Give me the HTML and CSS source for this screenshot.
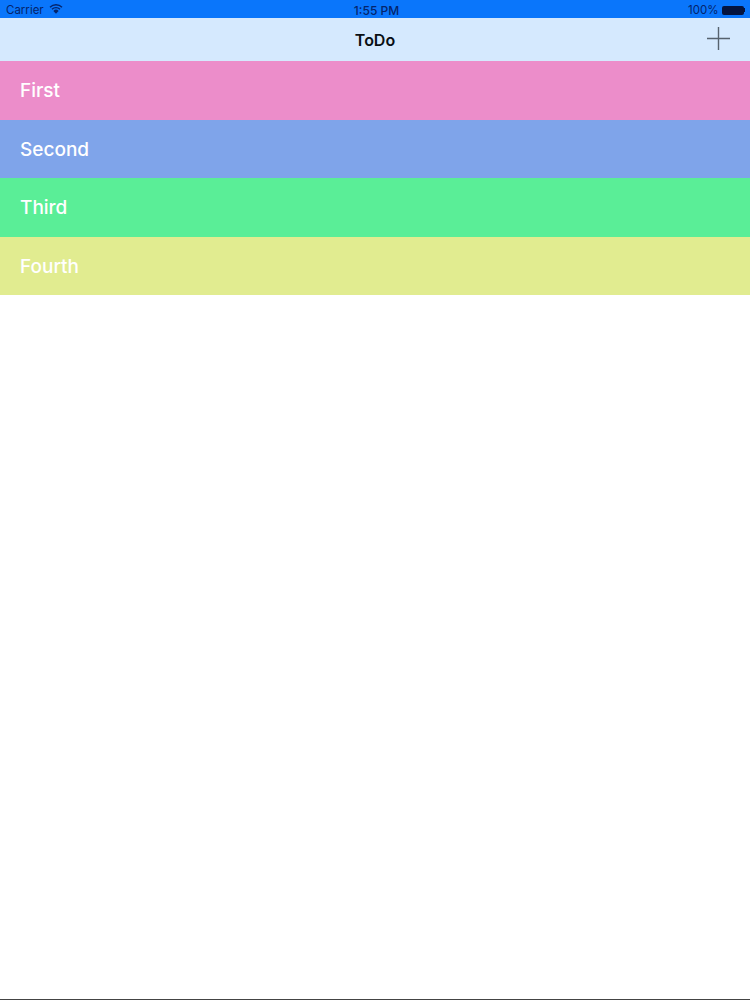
FILE: index.html
```html
<!DOCTYPE html>
<html lang="en">
<head>
<meta charset="utf-8">
<title>ToDo</title>
<link rel="stylesheet" href="styles.css">
</head>
<body>
<div class="app">
  <div class="status">
    <div class="status-left">
      <span>Carrier</span>
      <svg class="wifi" viewBox="0 0 14 10" width="14" height="10"><path d="M7 9.8 L4.4 6.9 A3.6 3.6 0 0 1 9.6 6.9 Z" fill="#04246b"/><path d="M3 5.3 A5.7 5.7 0 0 1 11 5.3" fill="none" stroke="#04246b" stroke-width="1.4"/><path d="M1 3.2 A8.5 8.5 0 0 1 13 3.2" fill="none" stroke="#04246b" stroke-width="1.4"/></svg>
    </div>
    <div class="status-time">1:55 PM</div>
    <div class="status-right">
      <span>100%</span>
      <span class="battery"></span>
      <span class="battery-tip"></span>
    </div>
  </div>
  <div class="nav">
    <div class="nav-title">ToDo</div>
    <svg class="plus" viewBox="0 0 23 23" width="23" height="23"><path d="M11.5 0V23M0 11.5H23" stroke="#56626e" stroke-width="1.4" fill="none"/></svg>
  </div>
  <div class="row pink"><span>First</span></div>
  <div class="row blue"><span>Second</span></div>
  <div class="row green"><span>Third</span></div>
  <div class="row yellow"><span>Fourth</span></div>
  <div class="empty"></div>
  <div class="bottom"></div>
</div>
</body>
</html>
```
FILE: styles.css
```css
* { box-sizing: border-box; }
html, body { margin: 0; padding: 0; background: #fff; }
.app {
  width: 750px;
  height: 1000px;
  display: flex;
  flex-direction: column;
  font-family: Inter, "Liberation Sans", sans-serif;
  overflow: hidden;
}
.status {
  height: 18px;
  background: #0a76fb;
  color: #04246b;
  font-size: 11.5px;
  display: flex;
  align-items: center;
  justify-content: space-between;
  padding: 2px 5px 0 6px;
  position: relative;
  flex: none;
}
.status-left { display: flex; align-items: center; gap: 5px; }
.wifi { display: block; margin-top: -2px; }
.status-time { font-weight: 500; font-size: 12px; position: absolute; left: 0; right: 0; top: 3px; text-align: center; padding-left: 3px; }
.status-right { display: flex; align-items: center; }
.battery { width: 22px; height: 9px; background: #04143f; border-radius: 2px; margin-left: 3px; }
.battery-tip { width: 1.5px; height: 4px; background: #04143f; }
.nav {
  height: 43px;
  background: #d5e9fe;
  display: flex;
  align-items: center;
  justify-content: flex-end;
  padding: 0 20px 2px 0;
  position: relative;
  flex: none;
}
.nav-title {
  position: absolute;
  left: 0;
  right: 0;
  top: 12px;
  text-align: center;
  font-size: 16px;
  font-weight: 600;
  color: #0a0f14;
}
.plus { display: block; }
.row {
  height: 58.6px;
  flex: none;
  display: flex;
  align-items: center;
  padding-left: 20px;
  color: #fff;
  font-size: 19px;
  font-weight: 550;
}
.row span { margin-top: 1px; }
.pink { background: #ec8dca; }
.blue { background: #7fa4ea; }
.green { background: #5aee97; }
.yellow { background: #e1ec90; }
.empty { flex: 1; background: #fff; }
.bottom { height: 1px; background: #444; flex: none; }
```
